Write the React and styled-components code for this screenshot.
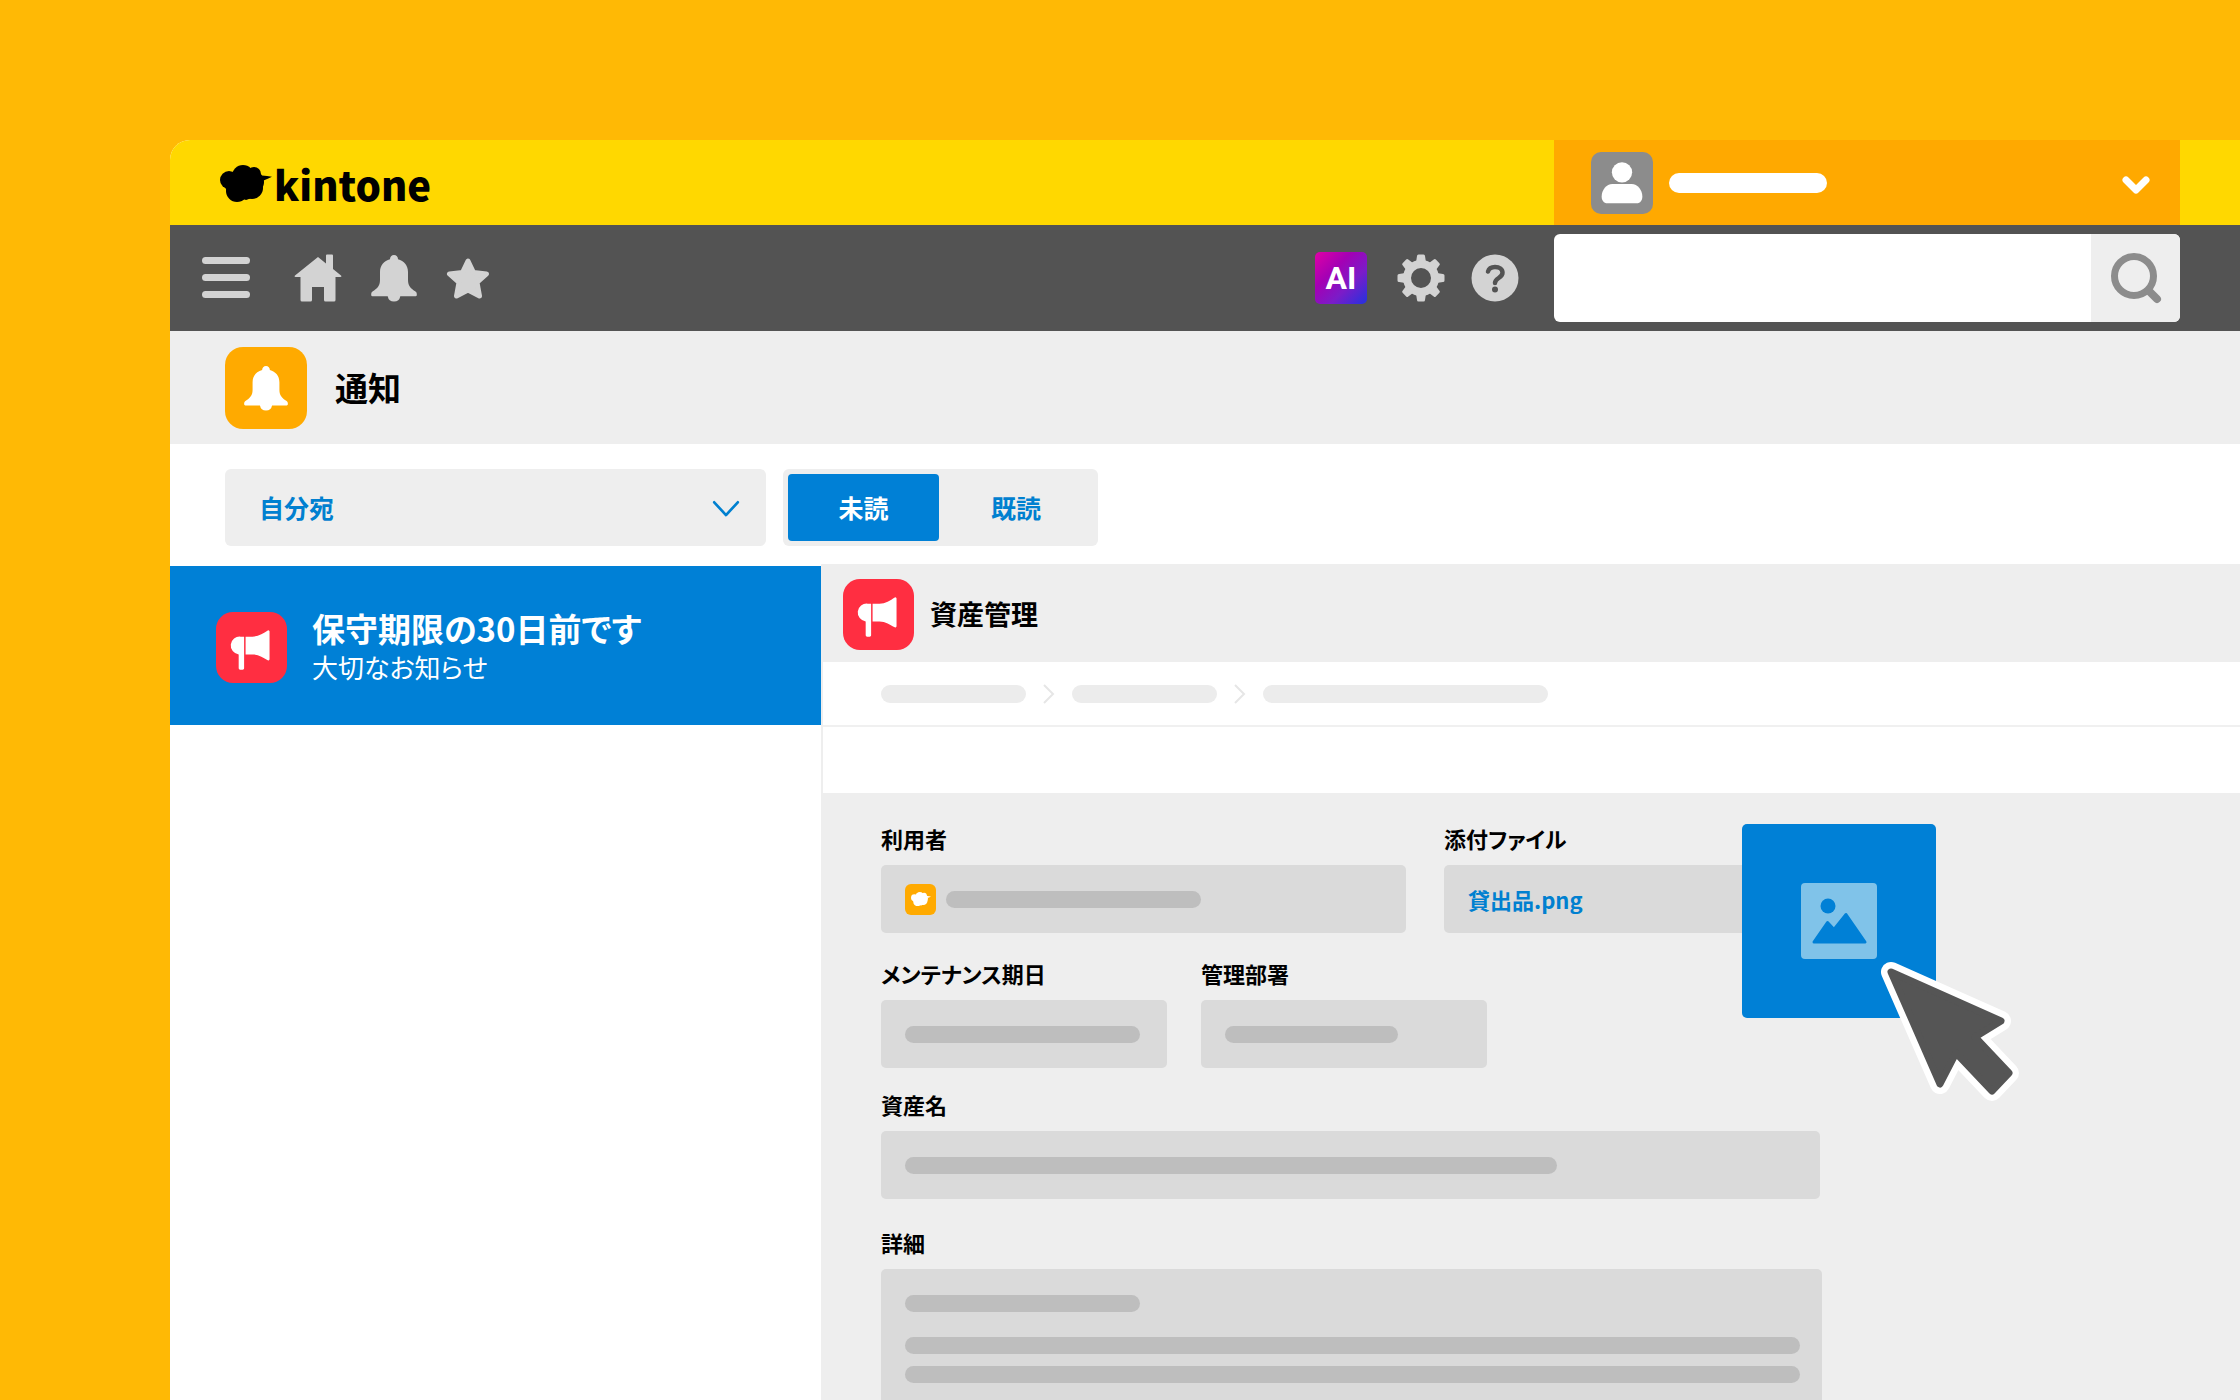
// App.jsx
import React, { useState } from "react";
import styled, { createGlobalStyle } from "styled-components";

const notices = [
    { id: 1, title: "保守期限の30日前です", body: "大切なお知らせ" },
];

function BirdShape(props) {
    return (
        <svg viewBox="0 0 52 37" aria-hidden="true" {...props}>
            <circle cx="9" cy="15" r="9" />
            <circle cx="23" cy="11" r="11" />
            <circle cx="34" cy="9" r="7" />
            <circle cx="33" cy="17" r="11" />
            <circle cx="32" cy="23" r="11" />
            <circle cx="17" cy="26" r="11" />
            <path d="M3 18l4 8h26l-4 8-12 1z" />
            <path d="M10 14h24v18l-8 3-12-6z" />
            <path d="M39 8l3 2.500q5 .5 10 1.300q-3 1.700-9 4z" />
        </svg>
    );
}

function BellShape(props) {
    return (
        <svg viewBox="0 0 48 48" fill="currentColor" aria-hidden="true" {...props}>
            <path d="M24 1a4 4 0 0 1 4 4.300C34 7 38 11.500 38 18v8c0 6 3 8.500 7.500 11.500a3 3 0 0 1 1.300 2.500v1a1.200 1.200 0 0 1-1.200 1.200H30.300a6.400 6.400 0 0 1-12.600 0H2.400A1.200 1.200 0 0 1 1.200 41v-1a3 3 0 0 1 1.300-2.500C7 34.500 10 32 10 26v-8C10 11.500 14 7 20 5.300A4 4 0 0 1 24 1z" />
        </svg>
    );
}

function MegaphoneShape(props) {
    return (
        <svg viewBox="0 0 72 72" fill="#fff" aria-hidden="true" {...props}>
            <path d="M25 25h3.500v32a1.500 1.500 0 0 1-1.500 1.500h-2.500a1.500 1.500 0 0 1-1.500-1.500V43a9 9 0 0 1 2-18z" />
            <path d="M30 25H37c6 0 11-3.500 15.500-6.300a1.200 1.200 0 0 1 1.800 1V48a1.200 1.200 0 0 1-1.800 1C48 46.500 43 43 37 43h-7z" />
        </svg>
    );
}

function ChevronDown({ stroke, ...rest }) {
    return (
        <svg viewBox="0 0 28 20" fill="none" stroke="currentColor" strokeWidth={stroke} strokeLinecap="round" strokeLinejoin="round" aria-hidden="true" {...rest}>
            <path d="M3 4l11 12L25 4" />
        </svg>
    );
}

function CrumbArrow() {
    return (
        <svg width="12" height="20" viewBox="0 0 12 20" fill="none" stroke="#e6e6e6" strokeWidth="2" aria-hidden="true">
            <path d="M1 1l9 9-9 9" />
        </svg>
    );
}

function App() {
    const [status, setStatus] = useState("unread");
    const [keyword, setKeyword] = useState("");

    return (
        <Desktop>
            <GlobalStyle />
            <AppWindow>
                <Header>
                    <Logo href="#">
                        <LogoMark />
                        kintone
                    </Logo>
                    <UserMenu aria-label="ユーザーメニュー">
                        <Avatar>
                            <svg width="62" height="62" viewBox="0 0 64 64" fill="#fff">
                                <circle cx="32" cy="21" r="10.500" />
                                <path d="M22 33h20c6 0 11 6 11 13 0 4-2 7-6 7H17c-4 0-6-3-6-7 0-7 5-13 11-13z" />
                            </svg>
                        </Avatar>
                        <UserName />
                        <UserArrow width="28" height="20" viewBox="0 0 28 20" aria-hidden="true">
                            <path d="M4 4l10 10L24 4" />
                        </UserArrow>
                    </UserMenu>
                </Header>

                <Toolbar>
                    <ToolGroup>
                        <MenuButton aria-label="メニュー">
                            <svg width="48" height="42" viewBox="0 0 48 42" fill="currentColor">
                                <rect y="0" width="48" height="7" rx="3.500" />
                                <rect y="17" width="48" height="7" rx="3.500" />
                                <rect y="34" width="48" height="7" rx="3.500" />
                            </svg>
                        </MenuButton>
                        <ToolButton aria-label="ホーム">
                            <svg width="48" height="48" viewBox="0 0 48 48" fill="currentColor">
                                <path d="M24 3l8 6.500V1.500a1 1 0 0 1 1-1h5a1 1 0 0 1 1 1V15l8 6.500c.8.700.4 1.500-.5 1.500h-5v23a1.500 1.500 0 0 1-1.500 1.500h-8.500A1.500 1.500 0 0 1 30 46V33H18v13a1.500 1.500 0 0 1-1.500 1.500H8A1.500 1.500 0 0 1 6.500 46V23h-5c-.9 0-1.300-.8-.5-1.500z" />
                            </svg>
                        </ToolButton>
                        <ToolButton aria-label="通知">
                            <BellShape width="48" height="48" />
                        </ToolButton>
                        <ToolButton aria-label="お気に入り">
                            <svg width="44" height="44" viewBox="0 0 44 44" fill="currentColor" stroke="currentColor" strokeWidth="5" strokeLinejoin="round">
                                <path d="M22 5l5.500 11.500L40.500 18l-9.500 8.500 2.500 13.500L22 34 10.500 40 13 26.500 3.500 18l13-1.500z" />
                            </svg>
                        </ToolButton>
                    </ToolGroup>
                    <ToolGroup>
                        <AiButton>AI</AiButton>
                        <GearButton aria-label="設定">
                            <svg width="48" height="48" viewBox="0 0 48 48" fill="none" stroke="currentColor">
                                <circle cx="24" cy="24" r="14" strokeWidth="8" />
                                {[0, 45, 90, 135].map((deg) => (
                                    <g key={deg} transform={`rotate(${deg} 24 24)`} fill="currentColor" stroke="none">
                                        <path d="M21.500.5h5a1.500 1.500 0 0 1 1.500 1.500l1 6.500H19L20 2A1.500 1.500 0 0 1 21.500.5z" />
                                        <path d="M21.500 47.500h5A1.500 1.500 0 0 0 28 46l1-6.500H19l1 6.500a1.500 1.500 0 0 0 1.500 1.500z" />
                                    </g>
                                ))}
                            </svg>
                        </GearButton>
                        <HelpButton aria-label="ヘルプ">
                            <svg width="48" height="48" viewBox="0 0 48 48">
                                <circle cx="24" cy="24" r="23.500" fill="currentColor" />
                                <path d="M17 17.500c1-3.500 3.500-4.500 7-4.500 4.500 0 7.500 2 7.500 5.700 0 5.300-7.500 5.300-7.500 10.300" fill="none" stroke="#535353" strokeWidth="4.500" strokeLinecap="round" />
                                <circle cx="24" cy="35.500" r="3" fill="#535353" />
                            </svg>
                        </HelpButton>
                        <SearchForm onSubmit={(event) => event.preventDefault()}>
                            <SearchInput
                                aria-label="検索"
                                value={keyword}
                                onChange={(event) => setKeyword(event.target.value)}
                            />
                            <SearchButton aria-label="検索する">
                                <svg width="52" height="52" viewBox="0 0 52 52" fill="none" stroke="#8c8c8c">
                                    <circle cx="24" cy="24" r="19.500" strokeWidth="7" />
                                    <path d="M39 39l8 8" strokeWidth="8" strokeLinecap="round" />
                                </svg>
                            </SearchButton>
                        </SearchForm>
                    </ToolGroup>
                </Toolbar>

                <PageTitle>
                    <TitleIcon>
                        <BellShape width="46" height="46" />
                    </TitleIcon>
                    <h1>通知</h1>
                </PageTitle>

                <FilterBar>
                    <SelectBox>
                        <select aria-label="宛先" defaultValue="mine">
                            <option value="mine">自分宛</option>
                            <option value="all">すべて</option>
                        </select>
                        <ChevronDown stroke="2.500" />
                    </SelectBox>
                    <Segment>
                        <SegmentButton $active={status === "unread"} onClick={() => setStatus("unread")}>未読</SegmentButton>
                        <SegmentButton $active={status === "read"} onClick={() => setStatus("read")}>既読</SegmentButton>
                    </Segment>
                </FilterBar>

                <Panes>
                    <NoticeList>
                        {notices.map((notice) => (
                            <NoticeItem key={notice.id}>
                                <AppIcon><MegaphoneShape /></AppIcon>
                                <span>
                                    <NoticeTitle>{notice.title}</NoticeTitle>
                                    <NoticeBody>{notice.body}</NoticeBody>
                                </span>
                            </NoticeItem>
                        ))}
                    </NoticeList>

                    <Detail>
                        <DetailHeader>
                            <AppIcon><MegaphoneShape /></AppIcon>
                            <h2>資産管理</h2>
                        </DetailHeader>
                        <Crumbs>
                            <Crumb $width={145} />
                            <CrumbArrow />
                            <Crumb $width={145} />
                            <CrumbArrow />
                            <Crumb $width={285} />
                        </Crumbs>
                        <ActionBar />

                        <Record>
                            <Row $gap={38} $space={27}>
                                <Field $width={525}>
                                    <Label>利用者</Label>
                                    <Value>
                                        <UserIcon><BirdShape width="20" fill="#fff" /></UserIcon>
                                        <Line $width={255} />
                                    </Value>
                                </Field>
                                <Field $width={340}>
                                    <Label>添付ファイル</Label>
                                    <Value>
                                        <FileLink href="#">貸出品.png</FileLink>
                                        <Preview>
                                            <svg width="76" height="76" viewBox="0 0 76 76" aria-hidden="true">
                                                <rect width="76" height="76" rx="4" fill="#80c3e9" />
                                                <circle cx="27" cy="23" r="7.500" fill="#0080d6" />
                                                <path d="M13 59l13.500-19.500 6.500 7L45 31.500 64 59z" fill="#0080d6" stroke="#0080d6" strokeWidth="3" strokeLinejoin="round" />
                                            </svg>
                                            <Cursor viewBox="0 0 144 144" aria-hidden="true">
                                                <path d="M14 14L124 63 98 79 132 115 115 133 79 95 63 126z" stroke="#fff" strokeWidth="20" />
                                                <path d="M14 14L124 63 98 79 132 115 115 133 79 95 63 126z" stroke="#555" strokeWidth="7" fill="#555" />
                                            </Cursor>
                                        </Preview>
                                    </Value>
                                </Field>
                            </Row>
                            <Row $gap={34} $space={23}>
                                <Field $width={286}>
                                    <Label>メンテナンス期日</Label>
                                    <Value><Line $width={235} /></Value>
                                </Field>
                                <Field $width={286}>
                                    <Label>管理部署</Label>
                                    <Value><Line $width={173} /></Value>
                                </Field>
                            </Row>
                            <Row $space={30}>
                                <Field $width={939}>
                                    <Label>資産名</Label>
                                    <Value><Line $width={652} /></Value>
                                </Field>
                            </Row>
                            <Row $last>
                                <Field $width={941}>
                                    <Label>詳細</Label>
                                    <LongValue>
                                        <Line $width={235} $space={25} />
                                        <Line $width={895} $space={12} />
                                        <Line $width={895} />
                                    </LongValue>
                                </Field>
                            </Row>
                        </Record>
                    </Detail>
                </Panes>
            </AppWindow>
        </Desktop>
    );
}

// 全体のスタイル
const GlobalStyle = createGlobalStyle`
    * {
        box-sizing: border-box;
    }

    body {
        margin: 0;
        background-color: #ffb905;
        color: #000;
        font-family: "Noto Sans CJK JP", "Noto Sans", sans-serif;
        font-feature-settings: "palt";
    }

    button, input, select {
        margin: 0;
        padding: 0;
        border: none;
        background: none;
        color: inherit;
        font: inherit;
        font-feature-settings: inherit;
    }

    button {
        cursor: pointer;
    }

    a {
        text-decoration: none;
    }

    h1, h2 {
        margin: 0;
    }

    svg {
        display: block;
        flex-shrink: 0;
    }
`;

const Desktop = styled.div`
    display: flex;
    min-height: 100vh;
    padding: 140px 0 0 170px;
    overflow: hidden;
    background-color: #ffb905;
`;

const AppWindow = styled.div`
    display: flex;
    flex: 1;
    flex-direction: column;
    min-width: 0;
    overflow: hidden;
    border-radius: 20px 0 0 0;
    background-color: #fff;
`;

// ヘッダー
const Header = styled.header`
    display: flex;
    justify-content: space-between;
    height: 85px;
    padding: 0 60px 0 50px;
    background-color: #ffd800;
`;

const Logo = styled.a`
    display: flex;
    align-items: center;
    gap: 2px;
    padding-top: 2px;
    color: #000;
    font-size: 40px;
    font-weight: 900;
    line-height: 60px;
`;

const LogoMark = styled(BirdShape)`
    width: 52px;
    height: 37px;
`;

const UserMenu = styled.button`
    display: flex;
    align-items: center;
    width: 626px;
    padding: 0 30px 0 37px;
    background-color: #ffa900;
`;

const Avatar = styled.span`
    overflow: hidden;
    border-radius: 10px;
    background-color: #8c8c8c;
`;

const UserName = styled.span`
    width: 158px;
    height: 20px;
    margin-left: 16px;
    border-radius: 10px;
    background-color: #fff;
`;

const UserArrow = styled.svg`
    margin: 6px 0 0 auto;
    fill: none;
    stroke: #fff;
    stroke-width: 7;
    stroke-linecap: round;
    stroke-linejoin: round;
`;

// ツールバー
const Toolbar = styled.nav`
    display: flex;
    justify-content: space-between;
    height: 106px;
    padding: 0 60px 0 32px;
    background-color: #535353;
    color: #d3d3d3;
`;

const ToolGroup = styled.div`
    display: flex;
    align-items: center;
`;

const ToolButton = styled.button`
    margin-right: 28px;
`;

const MenuButton = styled(ToolButton)`
    margin-right: 44px;
`;

const AiButton = styled.button`
    width: 52px;
    height: 52px;
    border-radius: 5px;
    background: linear-gradient(135deg, #d800a8 5%, #a400b4 35%, #7b1cc8 65%, #2f2fdc 95%);
    color: #fff;
    font-family: Roboto, "Liberation Sans", sans-serif;
    font-size: 32px;
    font-weight: 700;
    line-height: 52px;
`;

const GearButton = styled.button`
    margin-left: 30px;
`;

const HelpButton = styled.button`
    margin: 0 35px 0 26px;
`;

const SearchForm = styled.form`
    display: flex;
    width: 626px;
    height: 88px;
    overflow: hidden;
    border-radius: 6px;
    background-color: #fff;
`;

const SearchInput = styled.input`
    flex: 1;
    min-width: 0;
    padding: 0 24px;
    color: #333;
    font-size: 32px;
    outline: none;
`;

const SearchButton = styled.button`
    display: flex;
    align-items: center;
    justify-content: center;
    width: 89px;
    background-color: #eee;
`;

// タイトル
const PageTitle = styled.div`
    display: flex;
    align-items: center;
    gap: 28px;
    height: 113px;
    padding-left: 55px;
    background-color: #eee;

    h1 {
        padding-bottom: 2px;
        font-size: 33px;
        font-weight: 700;
        line-height: 48px;
    }
`;

const TitleIcon = styled.span`
    display: flex;
    align-items: center;
    justify-content: center;
    width: 82px;
    height: 82px;
    border-radius: 18px;
    background-color: #ffaa00;
    color: #fff;
`;

// 絞り込み
const FilterBar = styled.div`
    display: flex;
    gap: 17px;
    padding: 25px 55px 18px;
`;

const SelectBox = styled.div`
    display: grid;
    grid-template-columns: 1fr 60px;
    align-items: center;
    width: 541px;
    height: 77px;
    color: #0080d0;

    select {
        grid-row: 1;
        grid-column: 1 / 3;
        height: 100%;
        padding: 0 0 2px 34px;
        border-radius: 6px;
        background-color: #eee;
        font-size: 25px;
        font-weight: 700;
        appearance: none;
    }

    svg {
        grid-row: 1;
        grid-column: 2;
        width: 30px;
        margin: 3px 0 0 5px;
        pointer-events: none;
    }
`;

const Segment = styled.div`
    display: flex;
    height: 77px;
    padding: 5px;
    border-radius: 6px;
    background-color: #eee;
`;

const SegmentButton = styled.button`
    width: ${({ $active }) => ($active ? "151px" : "154px")};
    padding-bottom: 2px;
    border-radius: 4px;
    background-color: ${({ $active }) => ($active ? "#0080d6" : "transparent")};
    color: ${({ $active }) => ($active ? "#fff" : "#0080d0")};
    font-size: 25px;
    font-weight: 700;
`;

const Panes = styled.div`
    display: grid;
    flex: 1;
    grid-template-columns: 651px 1fr;
`;

// 通知一覧
const NoticeList = styled.div`
    padding-top: 2px;
`;

const NoticeItem = styled.button`
    display: flex;
    align-items: center;
    gap: 25px;
    width: 100%;
    height: 159px;
    padding: 3px 46px 0;
    background-color: #0080d6;
    color: #fff;
    text-align: left;
`;

const AppIcon = styled.span`
    width: 71px;
    height: 71px;
    overflow: hidden;
    border-radius: 17px;
    background-color: #ff2e41;
`;

const NoticeTitle = styled.span`
    display: block;
    font-size: 33px;
    font-weight: 700;
    line-height: 40px;
`;

const NoticeBody = styled.span`
    display: block;
    font-size: 26px;
    line-height: 38px;
`;

// 詳細
const Detail = styled.section`
    display: flex;
    flex-direction: column;
    min-width: 0;
    border-left: 2px solid #eee;
`;

const DetailHeader = styled.div`
    display: flex;
    align-items: center;
    gap: 16px;
    height: 98px;
    padding: 2px 0 0 20px;
    background-color: #eee;

    h2 {
        font-size: 27px;
        font-weight: 700;
        line-height: 40px;
    }
`;

const Crumbs = styled.div`
    display: flex;
    align-items: center;
    gap: 17px;
    height: 65px;
    padding-left: 58px;
    border-bottom: 2px solid #f0f0f0;
`;

const Crumb = styled.span`
    width: ${({ $width }) => $width}px;
    height: 18px;
    border-radius: 9px;
    background-color: #ececec;
`;

const ActionBar = styled.div`
    height: 66px;
`;

const Record = styled.div`
    display: flex;
    flex: 1;
    flex-direction: column;
    padding: 32px 0 0 58px;
    background-color: #eee;
`;

const Row = styled.div`
    display: flex;
    flex: ${({ $last }) => ($last ? "1" : "none")};
    gap: ${({ $gap }) => $gap || 0}px;
    margin-bottom: ${({ $space }) => $space || 0}px;
`;

const Field = styled.div`
    display: flex;
    flex-direction: column;
    width: ${({ $width }) => $width}px;
`;

const Label = styled.span`
    margin-bottom: 14px;
    font-size: 22px;
    font-weight: 700;
    line-height: 26px;
`;

const Value = styled.div`
    position: relative;
    display: flex;
    align-items: center;
    gap: 10px;
    height: 68px;
    padding: 0 24px;
    border-radius: 5px;
    background-color: #dadada;
`;

const LongValue = styled(Value)`
    flex: 1;
    flex-direction: column;
    align-items: flex-start;
    gap: 0;
    height: auto;
    padding: 26px 24px 16px;
    border-radius: 5px 5px 0 0;
`;

const Line = styled.span`
    width: ${({ $width }) => $width}px;
    height: 17px;
    margin-bottom: ${({ $space }) => $space || 0}px;
    border-radius: 9px;
    background-color: #bebebe;
`;

const UserIcon = styled.span`
    display: flex;
    align-items: center;
    justify-content: center;
    width: 31px;
    height: 31px;
    border-radius: 6px;
    background-color: #ffaa00;
`;

const FileLink = styled.a`
    color: #0080d0;
    font-size: 22px;
    font-weight: 700;
    line-height: 34px;
`;

// ドラッグ中の画像
const Preview = styled.div`
    position: absolute;
    top: -41px;
    left: 298px;
    display: flex;
    align-items: center;
    justify-content: center;
    width: 194px;
    height: 194px;
    border-radius: 5px;
    background-color: #0080d6;
`;

const Cursor = styled.svg`
    position: absolute;
    top: 134px;
    left: 135px;
    width: 144px;
    height: 144px;
    fill: none;
    stroke-linejoin: round;
`;

export default App;
